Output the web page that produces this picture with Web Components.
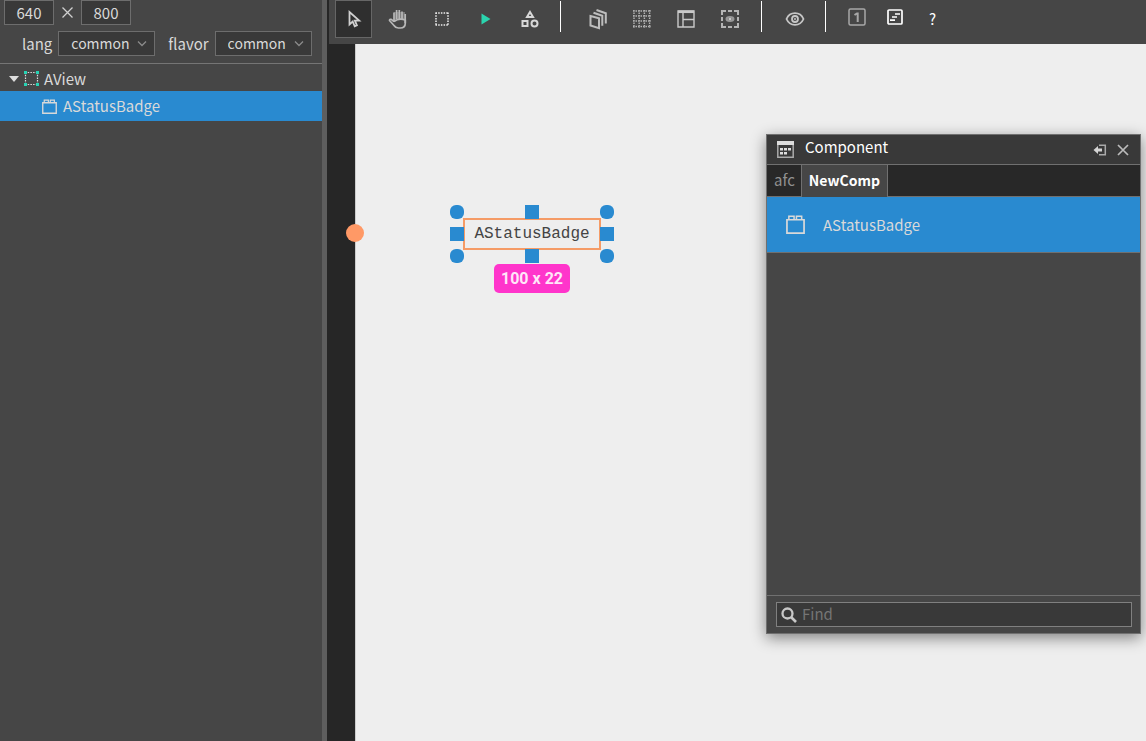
<!DOCTYPE html>
<html lang="en">
<head>
<meta charset="utf-8">
<title>Component editor</title>
<style>
html, body { height: 100%; margin: 0; }
body { overflow: hidden; background: #464646; color: #d9d9d9; font: 15px/24px "Noto Sans CJK KR", "Noto Sans", sans-serif; }
</style>
</head>
<body>
<editor-app></editor-app>
<script>
const BOX = `<svg viewBox="0 0 20 20" width="100%" height="100%" fill="none" stroke="currentColor"><path stroke-width="1.8" d="M1 5h18v14H1z"/><path stroke-width="1.6" d="M3 5V1.4h5.500V5M11 5V1.400h5.500V5"/></svg>`;
const ICONS = {
  box: BOX,
  cursor: `<svg width="20" height="20" viewBox="0 0 20 20" fill="none" stroke="#d0d0d0" stroke-width="1.8"><path d="M5.500 3v12.500l3.200-3 2 4.800 2.200-1-2-4.600h4.300z"/></svg>`,
  hand: `<svg width="20" height="22" viewBox="0 0 20 22"><path fill="#777" d="M6 4h11v10H6z"/><g fill="none" stroke="#b8b8b8" stroke-width="1.700" stroke-linejoin="round"><path fill="#464646" d="M6 13.500q5-4 11.300-1.500V15q0 5-5 5h-2Q7.500 20 6 17.500L1.500 12.500q0-1.500 1.700-1.200L6 13.500"/><path d="M6 13.500V4.500M8.600 11V2M11.300 11V2M14 11V3.500M17.200 6v9"/></g></svg>`,
  marquee: `<svg width="16" height="16" viewBox="0 0 16 16" fill="none" stroke="#ededed" stroke-width="1.500" stroke-dasharray="1.500 1.200"><path d="M1.500 2h13M1.500 14h13M2 1.500v13M14 1.500v13"/></svg>`,
  play: `<svg width="10" height="12" viewBox="0 0 10 12"><path fill="#2bd4ae" d="M.5.500 9.500 6l-9 5.500z"/></svg>`,
  shapes: `<svg width="18" height="18" viewBox="0 0 18 18" fill="none" stroke="#d8d8d8" stroke-width="2"><path d="m9 2 3 5H6zM1.500 11h5v5h-5z"/><circle cx="13.500" cy="13.500" r="3"/></svg>`,
  layers: `<svg width="20" height="22" viewBox="0 0 20 22" fill="none" stroke="#bdbdbd" stroke-width="2"><path d="m2.500 8 8.500 2.200v10l-8.500-2.700z"/><path d="m5.500 4.800 8.800 3v10M8.500 2l9.300 3.300v10.200"/></svg>`,
  dots: `<svg width="18" height="18" viewBox="0 0 18 18" fill="none" stroke="#b4b4b4" stroke-width="1.400" stroke-dasharray="1.500 1"><path d="M0 1h18M0 6h18M0 11h18M0 16.500h18M1 0v18M6.200 0v18M11.400 0v18M16.600 0v18"/></svg>`,
  layout: `<svg width="18" height="18" viewBox="0 0 18 18" fill="none" stroke="#c9c9c9" stroke-width="1.400"><path d="M1 1h16v16H1zM6 3v14M6 9.500h11"/><path stroke-width="2.500" d="M1 1.800h16"/></svg>`,
  focus: `<svg width="18" height="18" viewBox="0 0 18 18" fill="none" stroke="#b5b5b5" stroke-width="2"><path d="M1 5V1h4M13 1h4v4M17 13v4h-4M5 17H1v-4M7 1h4M7 17h4M1 7v4M17 7v4"/><ellipse cx="9" cy="9" rx="3.500" ry="2" stroke="#999" fill="#888"/><circle cx="9" cy="9" r="1" fill="#ddd" stroke="none"/></svg>`,
  eye: `<svg width="20" height="16" viewBox="0 0 20 16" fill="none" stroke="#c6c6c6" stroke-width="1.800"><path d="M1.500 8Q4 2.200 10 2.200T18.500 8Q16 13.800 10 13.800T1.500 8z"/><circle cx="10" cy="8" r="3"/><circle cx="10" cy="8" r="1" fill="#c6c6c6" stroke="none"/></svg>`,
  frame: `<svg width="18" height="18" viewBox="0 0 18 18" fill="none" stroke="#a8a8a8" stroke-width="1.500"><rect x="1" y="1" width="16" height="16" rx="1.500"/><path stroke-width="2" d="M6.500 7 9 5.500h.7V14"/></svg>`,
  align: `<svg width="16" height="16" viewBox="0 0 16 16" fill="none" stroke="#fff" stroke-width="1.700"><rect x="1" y="1" width="14" height="14" rx="1"/><path d="M8 5h5M5 8h5M3 11.200h5"/></svg>`,
  view: `<svg width="15" height="15" viewBox="0 0 15 15"><path fill="none" stroke="#ddd" stroke-width="1.200" stroke-dasharray="1.500 1.200" d="M1 1.500h13M1 13.500h13M1.500 1v13M13.500 1v13"/><path fill="#27d3b4" d="M0 0h3v3H0zM12 0h3v3h-3zM0 12h3v3H0zM12 12h3v3h-3z"/></svg>`,
  calendar: `<svg width="17" height="17" viewBox="0 0 17 17"><path fill="none" stroke="#aaa" stroke-width="1.500" d="M.8.800h15.400v15.400H.8z"/><path fill="#ddd" d="M0 0h17v4H0zM3 7h3v2.500H3zM7 7h3v2.500H7zM11 7h3v2.500h-3zM3 11h3v2.500H3zM7 11h3v2.500H7z"/></svg>`,
  dock: `<svg width="14" height="12" viewBox="0 0 14 12"><path fill="none" stroke="#aaa" stroke-width="1.500" d="M6 1.300h6.300v9.400H6"/><path fill="#d4d4d4" d="M.5 6 5 2v2.500h4v3H5V10z"/></svg>`,
  close: `<svg width="12" height="12" viewBox="0 0 12 12" fill="none" stroke="#bbb" stroke-width="1.700"><path d="m1 1 10 10M11 1 1 11"/></svg>`,
  search: `<svg width="16" height="16" viewBox="0 0 16 16" fill="none" stroke="#c8c8c8" stroke-width="2.300"><circle cx="6.500" cy="6.500" r="5"/><path stroke-width="2.600" d="m10 10 5 5"/></svg>`
};

class Base extends HTMLElement {
  render(css, html) {
    this.attachShadow({ mode: "open" }).innerHTML = `<style>*{box-sizing:border-box}button,input,select{font:inherit;color:inherit;margin:0;border-radius:0}svg{display:block;flex:none}${css}</style>${html}`;
  }
}

class UiIcon extends Base {
  connectedCallback() {
    this.render(`:host{display:block;flex:none}`, ICONS[this.getAttribute("name")]);
  }
}

class SizeFields extends Base {
  connectedCallback() {
    this.render(`
      :host{display:flex;align-items:center;gap:8px;padding-left:4px}
      input{width:50px;height:25px;padding:0;text-align:center;background:#393939;border:1px solid #6d6d6d}
      svg{width:11px;height:11px}`,
      `<input aria-label="Width" value="640"><svg viewBox="0 0 11 11" fill="none" stroke="#d0d0d0" stroke-width="1.300"><path d="m.5.500 10 10M10.500.500l-10 10"/></svg><input aria-label="Height" value="800">`);
  }
}

class LabeledSelect extends Base {
  connectedCallback() {
    const label = this.getAttribute("label");
    this.render(`
      :host{display:flex;align-items:center;gap:6px}
      .field{display:grid;align-items:center}
      .field > *{grid-area:1/1}
      select{appearance:none;width:97px;height:25px;padding:0 0 0 12px;background:#393939;border:1px solid #6d6d6d;font-size:14px;line-height:23px}
      svg{justify-self:end;margin-right:8px;pointer-events:none}`,
      `<label for="s">${label}</label><div class="field"><select id="s"><option>common</option></select><svg width="10" height="6" viewBox="0 0 10 6" fill="none" stroke="#8b8b8b" stroke-width="1.300"><path d="m1 .5 4 4 4-4"/></svg></div>`);
  }
}

class TreeItem extends Base {
  connectedCallback() {
    this.render(`
      :host{display:flex;align-items:center;height:27px;padding:2px 0 0 9px;gap:5px;box-sizing:border-box}
      :host([selected]){height:30px;padding:0 0 0 42px;gap:6px;background:#298ad0}
      ui-icon{width:15px;height:15px}`,
      `${this.hasAttribute("open") ? `<svg width="10" height="6" viewBox="0 0 10 6"><path fill="#ddd" d="M0 0h10L5 6z"/></svg>` : ""}<ui-icon name="${this.getAttribute("icon")}"></ui-icon><slot></slot>`);
  }
}

class SidePanel extends Base {
  connectedCallback() {
    this.render(`
      :host{display:block;width:322px;flex:none;background:#464646}
      .options{display:flex;gap:13px;padding:6px 0 7px 22px;border-bottom:1px solid #757575}`,
      `<size-fields></size-fields>
       <div class="options"><labeled-select label="lang"></labeled-select><labeled-select label="flavor"></labeled-select></div>
       <div class="tree"><tree-item icon="view" open>AView</tree-item><tree-item icon="box" selected>AStatusBadge</tree-item></div>`);
  }
}

class ToolBar extends Base {
  connectedCallback() {
    const b = (name, title, cls = "") => `<button class="${cls}" aria-label="${title}"><ui-icon name="${name}"></ui-icon></button>`;
    this.render(`
      :host{display:flex;height:44px;margin-left:2px;padding-left:6px;background:#464646;overflow:hidden}
      .group{display:flex;gap:7px}
      .tight{gap:1px}
      hr{width:1px;height:31px;margin:1px 18px 0 12px;border:0;background:#fff;flex:none}
      hr.near{margin:1px 14px 0 13px}
      hr.close{margin-right:12px}
      button{display:flex;align-items:center;justify-content:center;width:37px;height:38px;padding:0;border:1px solid transparent;background:none;flex:none}
      .on{background:#2f2f2f;border-color:#666}
      .tight button{height:34px}
      .tight .help{height:38px;color:#fff}`,
      `<div class="group">${b("cursor", "Select", "on")}${b("hand", "Pan")}${b("marquee", "Marquee")}${b("play", "Run")}${b("shapes", "Shapes")}</div><hr>
       <div class="group">${b("layers", "Layers")}${b("dots", "Grid")}${b("layout", "Layout")}${b("focus", "Focus")}</div><hr class="near">
       <div class="group">${b("eye", "Preview")}</div><hr class="close">
       <div class="group tight">${b("frame", "Frame one")}${b("align", "Align")}<button class="help">?</button></div>`);
  }
}

class SelectedWidget extends Base {
  connectedCallback() {
    this.render(`
      :host{display:grid;grid-template-columns:14px 136px 14px;grid-template-rows:14px 30px 14px;align-items:center;justify-items:center;width:164px}
      .name{grid-area:2/2;width:138px;height:32px;border:2px solid #f59b66;color:#444;font:16px/28px "Liberation Mono",monospace;text-align:center}
      i{width:14px;height:14px;background:#298ad0;z-index:1}
      .round{border-radius:6px}
      .tl{grid-area:1/1}.tr{grid-area:1/3}.bl{grid-area:3/1}.br{grid-area:3/3}
      .t{grid-area:1/2}.b{grid-area:3/2}.l{grid-area:2/1}.r{grid-area:2/3}
      .size{position:absolute;top:59px;left:44px;width:76px;height:29px;border-radius:5px;background:#ff35cb;color:#ffe6f8;font:bold 16px/30px Roboto,"Liberation Sans",sans-serif;text-align:center}`,
      `<div class="name"><slot></slot></div>
       <i class="round tl"></i><i class="round tr"></i><i class="round bl"></i><i class="round br"></i>
       <i class="t"></i><i class="b"></i><i class="l"></i><i class="r"></i>
       <div class="size">100 x 22</div>`);
  }
}

class ComponentPanel extends Base {
  connectedCallback() {
    this.render(`
      :host{display:flex;flex-direction:column;background:#464646;border:1px solid #707070;box-shadow:0 4px 14px rgba(0,0,0,.45);box-sizing:border-box}
      header{display:flex;align-items:center;height:30px;padding:0 11px 0 10px;background:#393939;border-bottom:1px solid #707070;color:#fff}
      h2{flex:1;margin:0 0 6px 11px;font-size:15px;line-height:24px;font-weight:400}
      header button{padding:0;border:0;background:none;margin-left:10px}
      nav{display:flex;height:32px;background:#282828;border-bottom:1px solid #707070}
      nav button{padding:0 6px 2px 7px;border:0;background:none;color:#909090;height:31px}
      nav .on{height:32px;padding:0 7px 2px;background:#464646;border:solid #707070;border-width:0 1px;color:#fff;font-size:14px;font-weight:700}
      .item{display:flex;align-items:center;gap:18px;height:56px;padding-left:19px;background:#298ad0;border-bottom:1px solid #707070}
      .item ui-icon{width:19px;height:19px}
      .list{flex:1}
      footer{padding:6px 8px 6px 9px;border-top:1px solid #707070}
      .find{display:flex;align-items:center;gap:5px;height:25px;padding-left:4px;background:#393939;border:1px solid #808080}
      input{flex:1;min-width:0;height:23px;padding:0 0 2px;border:0;background:none;outline:0}
      input::placeholder{color:#757575;opacity:1}`,
      `<header><ui-icon name="calendar"></ui-icon><h2>Component</h2><button aria-label="Dock"><ui-icon name="dock"></ui-icon></button><button aria-label="Close"><ui-icon name="close"></ui-icon></button></header>
       <nav><button>afc</button><button class="on">NewComp</button></nav>
       <div class="list"><div class="item"><ui-icon name="box"></ui-icon>AStatusBadge</div></div>
       <footer><label class="find"><ui-icon name="search"></ui-icon><input aria-label="Find" placeholder="Find"></label></footer>`);
  }
}

class DesignCanvas extends Base {
  connectedCallback() {
    this.render(`
      :host{display:block;flex:1;min-height:0;margin-left:28px;border-left:1px solid #ccc;background:#eee;position:relative}
      .pin{position:absolute;left:-10px;top:180px;width:18px;height:18px;border-radius:50%;background:#ff9966}
      selected-widget{position:absolute;left:94px;top:161px}
      component-panel{position:absolute;right:5px;top:90px;width:375px;height:500px}`,
      `<div class="pin"></div><selected-widget>AStatusBadge</selected-widget><component-panel></component-panel>`);
  }
}

class EditorApp extends Base {
  connectedCallback() {
    this.render(`
      :host{display:flex;height:100vh}
      .split{width:5px;flex:none;background:#5e5e5e}
      main{display:flex;flex-direction:column;flex:1;min-width:0;background:#262626}`,
      `<side-panel></side-panel><div class="split"></div><main><tool-bar></tool-bar><design-canvas></design-canvas></main>`);
  }
}

customElements.define("ui-icon", UiIcon);
customElements.define("size-fields", SizeFields);
customElements.define("labeled-select", LabeledSelect);
customElements.define("tree-item", TreeItem);
customElements.define("side-panel", SidePanel);
customElements.define("tool-bar", ToolBar);
customElements.define("selected-widget", SelectedWidget);
customElements.define("component-panel", ComponentPanel);
customElements.define("design-canvas", DesignCanvas);
customElements.define("editor-app", EditorApp);
</script>
</body>
</html>
